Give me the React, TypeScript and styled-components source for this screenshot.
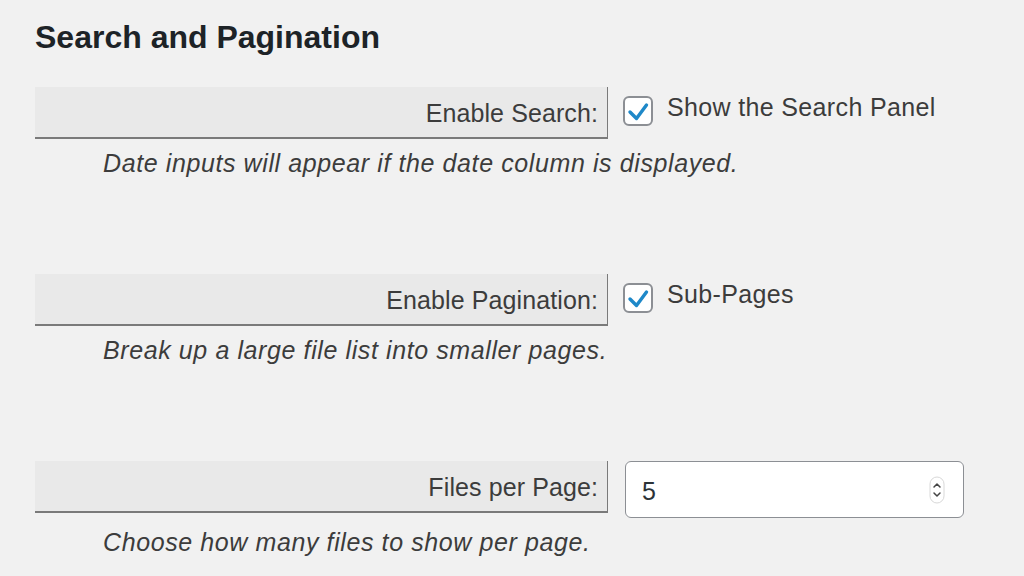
import styled, { createGlobalStyle } from "styled-components";

const GlobalStyle = createGlobalStyle`
  html, body {
    margin: 0;
    padding: 0;
    background: #f1f1f1;
  }
  body {
    font-family: "Liberation Sans", Arial, sans-serif;
    color: #3c434a;
  }
`;

const Page = styled.div`
  padding: 19px 0 0 35px;
  width: 1024px;
  height: 576px;
  box-sizing: border-box;
  overflow: hidden;
`;

const Heading = styled.h2`
  margin: 0 0 32px 0;
  font-size: 32px;
  line-height: 36px;
  font-weight: 700;
  color: #1d2327;
`;

const Section = styled.div`
  display: flex;
  flex-direction: column;
  margin-bottom: 95px;
`;

const Row = styled.div`
  display: flex;
  align-items: flex-start;
`;

const Label = styled.div`
  width: 573px;
  height: 52px;
  box-sizing: border-box;
  display: flex;
  align-items: center;
  justify-content: flex-end;
  padding: 3px 9px 0 0;
  background: #e9e9e9;
  border-right: 1.5px solid #7a7a7a;
  border-bottom: 2px solid #7a7a7a;
  font-size: 25px;
  letter-spacing: 0.1px;
  color: #3c3c3c;
`;

const Control = styled.div`
  display: flex;
  align-items: flex-start;
  gap: 14px;
  padding: 9px 0 0 15px;
  font-size: 25px;
  color: #3c3c3c;
`;

const Box = styled.span`
  width: 30px;
  height: 30px;
  box-sizing: border-box;
  border: 2px solid #8c8f94;
  border-radius: 6px;
  background: #fff;
  display: flex;
`;

const CheckText = styled.span`
  line-height: 30px;
  margin-top: -4px;
  letter-spacing: 0.35px;
`;

const Desc = styled.p`
  margin: 9px 0 0 68px;
  font-size: 25px;
  line-height: 31px;
  font-style: italic;
  letter-spacing: 0.6px;
  color: #3c3c3c;
`;

const NumberField = styled.div`
  margin-left: 17px;
  width: 339px;
  height: 57px;
  box-sizing: border-box;
  border: 1.5px solid #8c8f94;
  border-radius: 6px;
  background: #fff;
  display: flex;
  align-items: center;
  justify-content: space-between;
  padding: 4px 18px 0 16px;
  font-size: 25px;
  color: #2c3338;
`;

const Check = () => (
  <Box>
    <svg width="26" height="26" viewBox="0 0 26 26">
      <path
        d="M5 14 L11.5 20.5 L21.5 7"
        fill="none"
        stroke="#1e88c8"
        strokeWidth="3.4"
        strokeLinecap="round"
        strokeLinejoin="round"
      />
    </svg>
  </Box>
);

const Spinner = () => (
  <svg width="16" height="28" viewBox="0 0 16 28" style={{ marginTop: -4 }}>
    <rect x="1" y="1" width="14" height="26" rx="7" fill="#fff" stroke="#d8d8d8" strokeWidth="1" />
    <path d="M5 11 L8 8 L11 11" fill="none" stroke="#444" strokeWidth="1.5" strokeLinecap="round" strokeLinejoin="round" />
    <path d="M5 17 L8 20 L11 17" fill="none" stroke="#444" strokeWidth="1.5" strokeLinecap="round" strokeLinejoin="round" />
  </svg>
);

export default function App() {
  return (
    <>
      <GlobalStyle />
      <Page>
        <Heading>Search and Pagination</Heading>

        <Section>
          <Row>
            <Label>Enable Search:</Label>
            <Control>
              <Check />
              <CheckText>Show the Search Panel</CheckText>
            </Control>
          </Row>
          <Desc>Date inputs will appear if the date column is displayed.</Desc>
        </Section>

        <Section>
          <Row>
            <Label>Enable Pagination:</Label>
            <Control>
              <Check />
              <CheckText>Sub-Pages</CheckText>
            </Control>
          </Row>
          <Desc>Break up a large file list into smaller pages.</Desc>
        </Section>

        <Section>
          <Row>
            <Label>Files per Page:</Label>
            <NumberField>
              <span>5</span>
              <Spinner />
            </NumberField>
          </Row>
          <Desc>Choose how many files to show per page.</Desc>
        </Section>
      </Page>
    </>
  );
}
